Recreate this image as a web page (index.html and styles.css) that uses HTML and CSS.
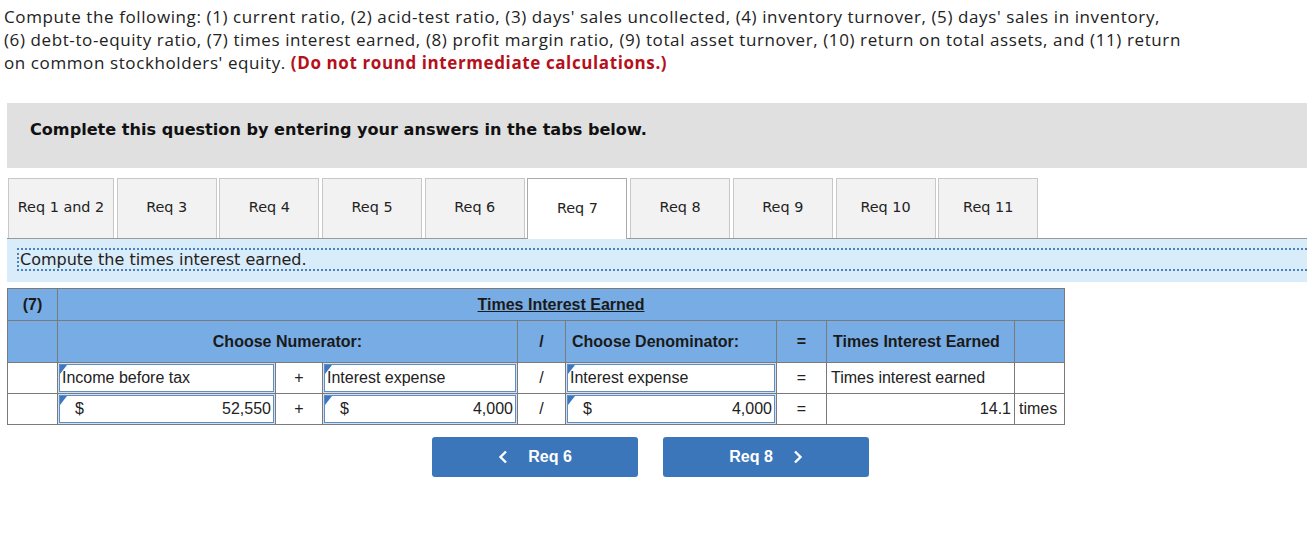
FILE: index.html
```html
<!DOCTYPE html>
<html>
<head>
<meta charset="utf-8">
<link rel="stylesheet" href="styles.css">
</head>
<body>
<p class="intro">Compute the following: (1) current ratio, (2) acid-test ratio, (3) days' sales uncollected, (4) inventory turnover, (5) days' sales in inventory,<br>(6) debt-to-equity ratio, (7) times interest earned, (8) profit margin ratio, (9) total asset turnover, (10) return on total assets, and (11) return<br>on common stockholders' equity. <strong class="warn">(Do not round intermediate calculations.)</strong></p>

<div class="banner">Complete this question by entering your answers in the tabs below.</div>

<div class="tabs">
  <div class="tab first">Req 1 and 2</div>
  <div class="tab">Req 3</div>
  <div class="tab">Req 4</div>
  <div class="tab">Req 5</div>
  <div class="tab">Req 6</div>
  <div class="tab active">Req 7</div>
  <div class="tab">Req 8</div>
  <div class="tab">Req 9</div>
  <div class="tab">Req 10</div>
  <div class="tab">Req 11</div>
</div>

<div class="prompt"><div class="prompt-inner">Compute the times interest earned.</div></div>

<table class="grid">
  <colgroup>
    <col class="c0"><col class="c1"><col class="c2"><col class="c3"><col class="c4"><col class="c5"><col class="c6"><col class="c7"><col class="c8">
  </colgroup>
  <tr class="h1">
    <th class="lbl">(7)</th>
    <th colspan="8" class="title"><u>Times Interest Earned</u></th>
  </tr>
  <tr class="h2">
    <th></th>
    <th colspan="3" class="center">Choose Numerator:</th>
    <th class="center">/</th>
    <th class="left">Choose Denominator:</th>
    <th class="center">=</th>
    <th class="left">Times Interest Earned</th>
    <th></th>
  </tr>
  <tr class="row">
    <td></td>
    <td class="inp"><div class="box">Income before tax</div></td>
    <td class="op">+</td>
    <td class="inp"><div class="box">Interest expense</div></td>
    <td class="op">/</td>
    <td class="inp"><div class="box">Interest expense</div></td>
    <td class="op">=</td>
    <td class="txt">Times interest earned</td>
    <td></td>
  </tr>
  <tr class="row">
    <td></td>
    <td class="inp"><div class="box num"><span>$</span><span>52,550</span></div></td>
    <td class="op">+</td>
    <td class="inp"><div class="box num"><span>$</span><span>4,000</span></div></td>
    <td class="op">/</td>
    <td class="inp"><div class="box num"><span>$</span><span>4,000</span></div></td>
    <td class="op">=</td>
    <td class="txt right">14.1</td>
    <td class="txt">times</td>
  </tr>
</table>

<div class="nav">
  <div class="btn"><svg class="chev" width="10" height="14" viewBox="0 0 10 14"><path d="M8 1.5 L2.5 7 L8 12.5" fill="none" stroke="#fff" stroke-width="2.4"/></svg><span>Req 6</span></div>
  <div class="btn"><span>Req 8</span><svg class="chev" width="10" height="14" viewBox="0 0 10 14"><path d="M2 1.5 L7.5 7 L2 12.5" fill="none" stroke="#fff" stroke-width="2.4"/></svg></div>
</div>
</body>
</html>
```

FILE: styles.css
```css
html, body {
  margin: 0;
  padding: 0;
  background: #fff;
}
body {
  width: 1307px;
  height: 540px;
  overflow: hidden;
}
.intro {
  margin: 5px 0 0 4px;
  font-family: "Open Sans", "Liberation Sans", sans-serif;
  font-size: 17px;
  letter-spacing: 0.6px;
  line-height: 23px;
  color: #222;
  white-space: nowrap;
}
.warn {
  color: #b5101b;
  font-weight: 700;
}
.banner {
  margin: 29px 0 0 7px;
  height: 65px;
  background: #e0e0e0;
  box-sizing: border-box;
  padding: 17px 0 0 23px;
  font-family: "DejaVu Sans", Verdana, sans-serif;
  font-weight: 700;
  font-size: 16.1px;
  color: #111;
}
.tabs {
  display: flex;
  gap: 2.7px;
  margin: 10px 0 0 8px;
  height: 60px;
  align-items: flex-end;
}
.tab {
  box-sizing: border-box;
  width: 100px;
  height: 60px;
  background: #f2f2f2;
  border: 1px solid #c8c8c8;
  border-bottom: none;
  display: flex;
  align-items: center;
  justify-content: center;
  font-family: "DejaVu Sans", Verdana, sans-serif;
  font-size: 14.4px;
  color: #222;
  padding-bottom: 3px;
}
.tab.first {
  width: 106px;
}
.tab.active {
  background: #fff;
  border-color: #aaa;
  position: relative;
  z-index: 1;
  height: 61px;
  margin-bottom: -1px;
}
.prompt {
  margin-left: 7px;
  height: 44px;
  border-top: 1px solid #999;
  background: #d9ecfa;
  box-sizing: border-box;
  padding: 9px 0 0 10px;
}
.prompt-inner {
  border: 2px dotted #4a82c0;
  border-right: none;
  height: 23px;
  box-sizing: border-box;
  font-family: "DejaVu Sans", Verdana, sans-serif;
  font-size: 16px;
  line-height: 19px;
  color: #222;
  padding-left: 1px;
}
.grid {
  margin: 6px 0 0 7px;
  border-collapse: collapse;
  table-layout: fixed;
  width: 1058px;
  font-family: "Liberation Sans", Arial, sans-serif;
  font-size: 16px;
  color: #222;
}
.c0 { width: 50px; }
.c1 { width: 218px; }
.c2 { width: 47px; }
.c3 { width: 195px; }
.c4 { width: 48px; }
.c5 { width: 211px; }
.c6 { width: 50px; }
.c7 { width: 188px; }
.c8 { width: 50px; }
.grid th, .grid td {
  border: 1px solid #7a7a7a;
  padding: 0;
}
.grid th {
  background: #78ace4;
  font-weight: 700;
  color: #1a1a1a;
}
.h1 { height: 32px; }
.h2 { height: 42px; }
.row { height: 31px; }
.grid .title {
  text-align: center;
  padding-left: 0;
}
.grid .lbl {
  text-align: center;
}
.grid .center { text-align: center; }
.grid .left { text-align: left; padding-left: 6px; }
.grid td.op {
  text-align: center;
}
.grid td.txt {
  padding: 0 4px;
}
.grid td.right { text-align: right; padding-right: 3px; }
.grid td.inp {
  padding: 0;
}
.box {
  position: relative;
  height: 30px;
  box-sizing: border-box;
  border: 1px solid #d2e1f2;
  box-shadow: inset 0 0 0 1px #5d8cc6;
  padding: 0 3px;
  display: flex;
  align-items: center;
  background: #fff;
}
.box::before {
  content: "";
  position: absolute;
  left: 1px;
  top: 1px;
  width: 0;
  height: 0;
  border-top: 9px solid #3b78c0;
  border-right: 7px solid transparent;
}
.box.num {
  justify-content: space-between;
  padding: 0 3px 0 16px;
}
.nav {
  display: flex;
  gap: 25px;
  margin: 12px 0 0 432px;
}
.btn {
  width: 206px;
  height: 40px;
  background: #3a76b9;
  border-radius: 3px;
  color: #fff;
  font-family: "Liberation Sans", Arial, sans-serif;
  font-weight: 700;
  font-size: 16px;
  display: flex;
  align-items: center;
  justify-content: center;
  gap: 20px;
}
.chev {
  display: block;
}
```
